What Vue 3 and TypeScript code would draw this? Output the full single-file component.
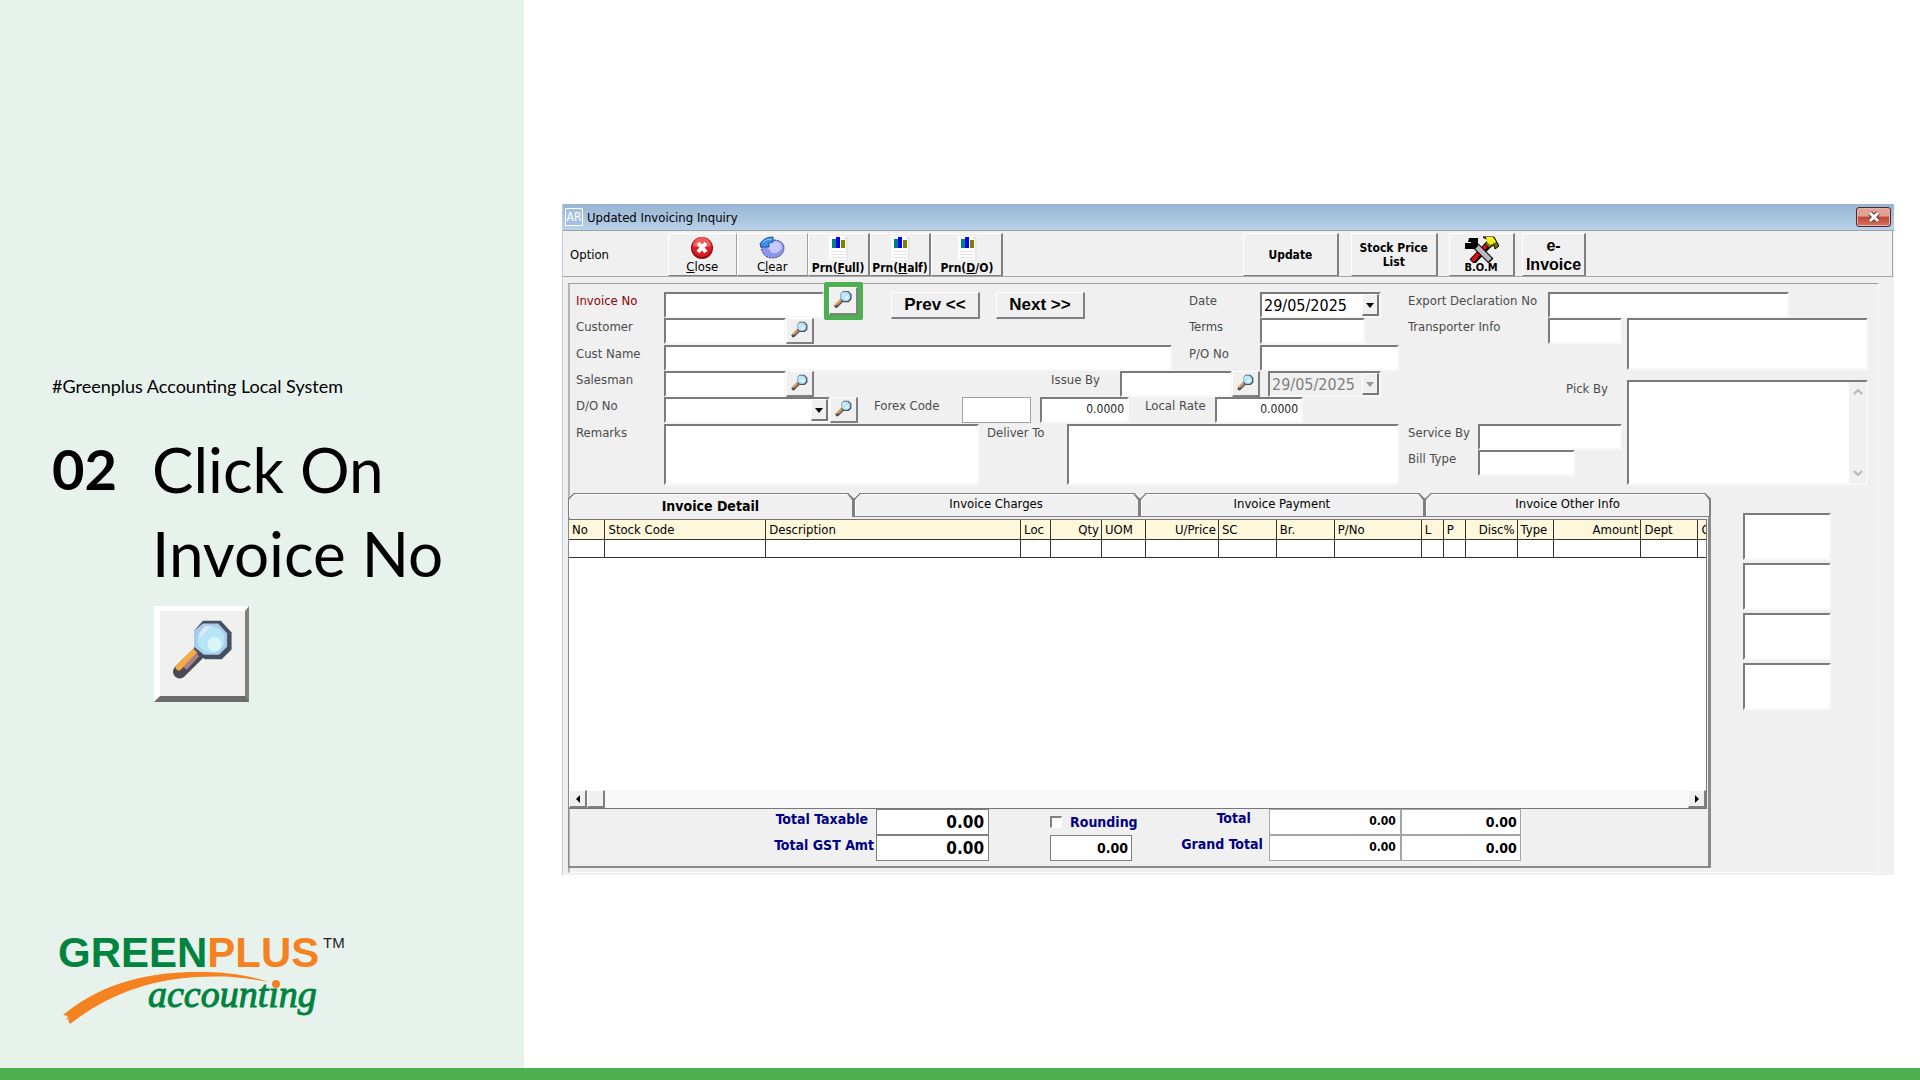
<script setup lang="ts">
import { ref, h } from 'vue'

interface Column { name: string; width: number; right?: boolean }

const columns: Column[] = [
  { name: 'No', width: 36 },
  { name: 'Stock Code', width: 161 },
  { name: 'Description', width: 255 },
  { name: 'Loc', width: 30 },
  { name: 'Qty', width: 51, right: true },
  { name: 'UOM', width: 44 },
  { name: 'U/Price', width: 73, right: true },
  { name: 'SC', width: 58 },
  { name: 'Br.', width: 58 },
  { name: 'P/No', width: 87 },
  { name: 'L', width: 22 },
  { name: 'P', width: 22 },
  { name: 'Disc%', width: 52, right: true },
  { name: 'Type', width: 36 },
  { name: 'Amount', width: 88, right: true },
  { name: 'Dept', width: 57 },
  { name: 'C', width: 8 },
]
const totalWidth = columns.reduce((sum, c) => sum + c.width, 0)

const tabs = ['Invoice Detail', 'Invoice Charges', 'Invoice Payment', 'Invoice Other Info']
const activeTab = ref(0)

const Magnifier = () =>
  h('svg', { viewBox: '0 0 95 95', class: 'magnifier', 'aria-hidden': 'true', style: 'display:block;width:100%;height:100%' }, [
    h('path', { d: 'M42 48 L22 68', stroke: '#4a4a55', 'stroke-width': 15, 'stroke-linecap': 'round' }),
    h('path', { d: 'M40 44 L21 63', stroke: '#f5ab42', 'stroke-width': 7, 'stroke-linecap': 'round' }),
    h('path', { d: 'M42 49 L28 64', stroke: '#a9828a', 'stroke-width': 5 }),
    h('path', { d: 'M48 11 H68 L80 24 V43 L69 54 H50 L38 43 V22 Z', fill: '#44505f' }),
    h('path', { d: 'M48 14 H65 L75 25 V40 L66 49 H49 L38 40 V22 Z', fill: '#a9ccec' }),
    h('circle', { cx: 57, cy: 32, r: 15, fill: '#b5e6f6' }),
    h('circle', { cx: 61, cy: 37, r: 8, fill: '#d9f5f6' }),
    h('path', { d: 'M43 26 L50 17 L57 17 L45 30 Z', fill: '#dbe9fa' }),
  ])

const Report = () =>
  h('svg', { viewBox: '0 0 22 26', class: 'report', 'aria-hidden': 'true', style: 'display:block;width:22px;height:26px' }, [
    h('path', { d: 'M2 1 H17 L21 5 V25 H2 Z', fill: '#ffffff' }),
    h('path', { d: 'M17 3 H20 V25', fill: 'none', stroke: '#cfcfcf' }),
    h('rect', { x: 5, y: 4, width: 4, height: 9, fill: '#008080' }),
    h('rect', { x: 9, y: 2, width: 4, height: 11, fill: '#0000ff' }),
    h('rect', { x: 14, y: 5, width: 4, height: 8, fill: '#808000' }),
    h('path', { d: 'M4 16.5 H18 M4 19.5 H18 M4 22.5 H18', stroke: '#e4e4e4' }),
  ])
</script>

<template>
  <div class="page">
    <aside class="intro">
      <p class="tag">#Greenplus Accounting Local System</p>
      <div class="step">
        <strong class="number">02</strong>
        <div>
          <h1>Click On<br />Invoice No</h1>
          <button class="look big" aria-label="Search"><Magnifier /></button>
        </div>
      </div>
      <svg class="logo" viewBox="0 0 300 100" role="img" aria-label="Greenplus accounting">
        <text x="0" y="36" class="brand"><tspan fill="#00833f">GREEN</tspan><tspan fill="#f58220">PLUS</tspan></text>
        <text x="265" y="17" class="tm">TM</text>
        <path d="M5 84 C48 49 95 41 140 41 C168 41 190 44 211 51 C180 45 160 45 140 46 C95 48 52 62 12 93 L10 89 L12 87 L8 89 L10 85 Z" fill="#f58220" />
        <text x="90" y="76" class="sub">accounting</text>
        <circle cx="218" cy="53" r="4" fill="#f58220" />
      </svg>
    </aside>

    <main class="stage">
      <section class="window">
        <header class="titlebar">
          <span class="app-icon">AR</span>
          <span>Updated Invoicing Inquiry</span>
          <button class="exit" aria-label="Close window">
            <svg viewBox="0 0 14 12"><path d="M3 2 L11 10 M11 2 L3 10" stroke="#6b3838" stroke-width="5" /><path d="M3 2 L11 10 M11 2 L3 10" stroke="#fff" stroke-width="3" /></svg>
          </button>
        </header>

        <nav class="toolbar">
          <span class="option">Option</span>
          <button class="tool w-close flat">
            <svg class="glyph" viewBox="0 0 24 24"><circle cx="12" cy="12" r="11" fill="#8e0d12" /><circle cx="12" cy="11" r="10" fill="#dc1d22" /><path d="M3 10 A9 9 0 0 1 21 10 Q12 13 3 10" fill="#ec5c58" /><path d="M8 7 L16 16 M16 7 L8 16" stroke="#fff" stroke-width="4" /></svg>
            <span><u>C</u>lose</span>
          </button>
          <button class="tool w-clear flat">
            <svg class="glyph wide" viewBox="0 0 26 24"><path d="M2 10 Q3 22 14 22 Q25 21 25 11 Q24 4 14 4 L12 11 Z" fill="#8f93ee" stroke="#35356e" stroke-dasharray="2 1" /><path d="M8 11 L15 5 Q23 6 23 12 Q20 18 13 17 Z" fill="#c5c9ff" /><path d="M1 8 Q5 1 14 1 V6 L10 7 V11 H2 Z" fill="#3f91e8" stroke="#164f9b" /><path d="M4 6 Q7 3 13 3" fill="none" stroke="#93c8ff" /></svg>
            <span>C<u>l</u>ear</span>
          </button>
          <button class="tool w-full"><Report /><b>Prn(<u>F</u>ull)</b></button>
          <button class="tool w-half"><Report /><b>Prn(<u>H</u>alf)</b></button>
          <button class="tool w-do"><Report /><b>Prn(<u>D</u>/O)</b></button>
          <button class="tool w-update"><b>Update</b></button>
          <button class="tool w-stock"><b>Stock Price<br />List</b></button>
          <button class="tool w-bom">
            <svg class="tools" viewBox="0 0 36 28"><path d="M9 27 L25 10" stroke="#000" stroke-width="7" /><path d="M9 26 L24 10" stroke="#e01010" stroke-width="4" /><path d="M13 11 L28 26" stroke="#000" stroke-width="7" /><path d="M13 11 L27 25" stroke="#b9b9bf" stroke-width="5" /><path d="M6 3 H15 V11 L12 14 H2 V8 H8 V7 H5 Z" fill="#000" /><path d="M20 2 H31 L36 11 L32 14 L31 10 L26 13 L22 9 L25 5 Z" fill="#777000" stroke="#000" /><path d="M23 2 H30 L33 7 L27 10 L24 7 Z" fill="#f7ef13" /></svg>
            <b>B.O.M</b>
          </button>
          <button class="tool w-einv"><b>e-<br />Invoice</b></button>
        </nav>

        <div class="panel">
          <form class="form" @submit.prevent>
            <div class="left">
              <div class="upper">
                <div>
                  <div class="row r1">
                    <label for="inv" class="required">Invoice No</label>
                    <input id="inv" class="field" />
                    <div class="highlight"><button type="button" class="look" aria-label="Find invoice"><Magnifier /></button></div>
                    <div class="paging">
                      <button type="button">Prev &lt;&lt;</button>
                      <button type="button">Next &gt;&gt;</button>
                    </div>
                  </div>
                  <div class="row r2">
                    <label for="cust">Customer</label>
                    <input id="cust" class="field" />
                    <button type="button" class="look" aria-label="Find customer"><Magnifier /></button>
                  </div>
                  <div class="row r3 tall">
                    <label for="name">Cust Name</label>
                    <input id="name" class="field" />
                  </div>
                </div>
                <div>
                  <div class="row d1">
                    <label for="date">Date</label>
                    <span class="combo"><select id="date"><option>29/05/2025</option></select><i class="drop"></i></span>
                  </div>
                  <div class="row d2">
                    <label for="terms">Terms</label>
                    <input id="terms" class="field" />
                  </div>
                  <div class="row d3 tall">
                    <label for="po">P/O No</label>
                    <input id="po" class="field" />
                  </div>
                </div>
              </div>
              <div class="row r4">
                <label for="sales">Salesman</label>
                <input id="sales" class="field" />
                <button type="button" class="look" aria-label="Find salesman"><Magnifier /></button>
                <label for="issue" class="end">Issue By</label>
                <input id="issue" class="field" />
                <button type="button" class="look" aria-label="Find issuer"><Magnifier /></button>
                <span class="combo off"><select aria-label="Issue date" disabled><option>29/05/2025</option></select><i class="drop"></i></span>
              </div>
              <div class="row r5">
                <label for="do">D/O No</label>
                <span class="combo"><select id="do"><option></option></select><i class="drop"></i></span>
                <button type="button" class="look" aria-label="Find delivery order"><Magnifier /></button>
                <label for="forex" class="inset">Forex Code</label>
                <input id="forex" class="field thin" />
                <input class="field num spaced" aria-label="Forex rate" value="0.0000" />
                <label for="rate" class="inset">Local Rate</label>
                <input id="rate" class="field num" value="0.0000" />
              </div>
              <div class="row r6">
                <label for="remarks">Remarks</label>
                <textarea id="remarks" class="field"></textarea>
                <label for="deliver" class="near">Deliver To</label>
                <textarea id="deliver" class="field"></textarea>
              </div>
            </div>

            <div class="right">
              <div class="row e1">
                <label for="export">Export Declaration No</label>
                <input id="export" class="field" />
              </div>
              <div class="e2">
                <label for="trans">Transporter Info</label>
                <input id="trans" class="field" />
                <textarea class="field" aria-label="Transporter details"></textarea>
              </div>
              <div class="e3">
                <div>
                  <label for="pick" class="pick">Pick By</label>
                  <div class="row e4">
                    <label for="service">Service By</label>
                    <input id="service" class="field" />
                  </div>
                  <div class="row e5">
                    <label for="bill">Bill Type</label>
                    <input id="bill" class="field" />
                  </div>
                </div>
                <div class="pickbox">
                  <textarea id="pick" class="field"></textarea>
                  <div class="vbar">
                    <svg viewBox="0 0 10 6"><path d="M1 5 L5 1 L9 5" /></svg>
                    <svg viewBox="0 0 10 6"><path d="M1 1 L5 5 L9 1" /></svg>
                  </div>
                </div>
              </div>
            </div>
          </form>

          <div class="lower">
            <section class="pane">
              <div class="tabs" role="tablist">
                <button v-for="(t, i) in tabs" :key="t" role="tab" :class="{ active: i === activeTab }" :aria-selected="i === activeTab" @click="activeTab = i">{{ t }}</button>
              </div>
              <div class="sheet">
                <div class="grid-area">
                  <table>
                    <colgroup>
                      <col v-for="c in columns" :key="c.name" :style="{ width: (c.width / totalWidth) * 100 + '%' }" />
                    </colgroup>
                    <thead>
                      <tr><th v-for="c in columns" :key="c.name" :class="{ end: c.right }">{{ c.name }}</th></tr>
                    </thead>
                    <tbody>
                      <tr><td v-for="c in columns" :key="c.name"></td></tr>
                    </tbody>
                  </table>
                  <div class="hbar">
                    <button aria-label="Scroll left"><svg viewBox="0 0 6 8"><path d="M5 0 V8 L1 4 Z" /></svg></button>
                    <span class="thumb"></span>
                    <button class="last" aria-label="Scroll right"><svg viewBox="0 0 6 8"><path d="M1 0 V8 L5 4 Z" /></svg></button>
                  </div>
                </div>
                <div class="totals">
                  <div class="t-tax">
                    <label for="taxable">Total Taxable</label><input id="taxable" value="0.00" />
                    <label for="gst">Total GST Amt</label><input id="gst" value="0.00" />
                  </div>
                  <div class="t-round">
                    <label><input type="checkbox" />Rounding</label>
                    <input aria-label="Rounding amount" value="0.00" />
                  </div>
                  <div class="t-grand">
                    <label for="total">Total</label><input id="total" class="small" value="0.00" /><input aria-label="Total in local currency" value="0.00" />
                    <label for="grand">Grand Total</label><input id="grand" class="small" value="0.00" /><input aria-label="Grand total in local currency" value="0.00" />
                  </div>
                </div>
              </div>
            </section>
            <div class="side">
              <textarea v-for="n in 4" :key="n" class="field" :aria-label="'Note ' + n"></textarea>
            </div>
          </div>
        </div>
      </section>
    </main>
    <footer class="strip"></footer>
  </div>
</template>

<style>
body { margin: 0; }
</style>

<style scoped>
* { box-sizing: border-box; }
.page {
  min-height: 100vh;
  display: grid;
  grid-template: 1fr 12px / 131fr 349fr;
  background: #fff;
  font-family: "DejaVu Sans Condensed", "Noto Sans", sans-serif;
}
.strip { grid-column: 1 / 3; background: #4caf50; }
button, input, select, textarea { font: inherit; color: inherit; margin: 0; padding: 0; border-radius: 0; }

.intro {
  background: #e8f2ec;
  padding: 373px 20px 37px 52px;
  display: flex;
  flex-direction: column;
  color: #000;
  font-family: Lato, sans-serif;
}
.tag { margin: 0; font-size: 18px; line-height: 26px; }
.step { display: grid; grid-template-columns: 100px 1fr; margin-top: 28px; }
.number { font-size: 56px; line-height: 84px; }
h1 { margin: 0; font-size: 62px; line-height: 84px; font-weight: 400; white-space: nowrap; }
.logo { width: 300px; height: 100px; margin: auto 0 0 6px; overflow: visible; }
.brand { font: bold 42px "Liberation Sans", sans-serif; }
.tm { font: 15px "Liberation Sans", sans-serif; fill: #222; }
.sub { font: italic 38px "Liberation Serif", serif; fill: #00833f; stroke: #00833f; stroke-width: 1px; }

.look {
  display: block;
  width: 28px;
  height: 26px;
  background: #f0f0f0;
  border: 1px solid #fff;
  border-right: 2px solid #808080;
  border-bottom: 2px solid #808080;
}
.look.big { width: 95px; height: 96px; margin: 11px 0 0 2px; border-width: 5px 4px 6px 6px; border-bottom-color: #6a6a6a; }

.stage { display: flex; flex-direction: column; justify-content: center; padding: 11px 26px 0 38px; min-width: 0; }
.window { background: #f0f0f0; border-left: 1px solid #b9cfe8; padding-bottom: 2px; color: #000; font-size: 13px; }
.titlebar {
  height: 27px;
  display: flex;
  align-items: center;
  gap: 4px;
  padding: 0 3px 0 2px;
  background: linear-gradient(#98b4d2, #b9d1ea);
  border-bottom: 1px solid #a0a0a0;
}
.app-icon { width: 18px; height: 18px; border: 1px solid #fff; color: #fff; font-size: 12px; line-height: 16px; text-align: center; background: #a5c0de; }
.exit { margin-left: auto; width: 35px; height: 20px; border: 1px solid #4d2430; border-radius: 3px; background: linear-gradient(#e0a294 0 45%, #c24434 50%, #d2735f); display: grid; place-items: center; box-shadow: inset 0 0 0 1px #e8b4aa; }
.exit svg { width: 14px; height: 12px; }

.toolbar {
  display: grid;
  grid-template-columns: 105fr 69fr 71fr 62fr 62fr 72fr 240fr 96fr 12fr 87fr 11fr 66fr 7fr 65fr 306fr;
  height: 46px;
  padding-top: 2px;
  margin-right: 1px;
  border: 1px solid #a5a5a5;
  border-width: 0 1px 1px 0;
}
.option { align-self: center; padding-left: 7px; }
.tool {
  min-width: 0;
  display: flex;
  flex-direction: column;
  align-items: center;
  justify-content: center;
  white-space: nowrap;
  line-height: 14px;
  background: #f0f0f0;
  border: 1px solid #fff;
  border-right: 2px solid #808080;
  border-bottom: 1px solid #808080;
  overflow: hidden;
}
.tool b { font-size: 12px; }
.tool.flat { border-right: 1px solid #a0a0a0; }
.w-update { grid-column: 8; }
.w-stock { grid-column: 10; }
.w-bom { grid-column: 12; }
.tool.w-bom b { font-size: 11px; margin-top: -2px; }
.w-einv { grid-column: 14; font-family: "Liberation Sans", sans-serif; }
.tool.w-einv b { font-size: 16px; line-height: 19px; }
.glyph { width: 24px; height: 24px; }
.glyph.wide { width: 26px; }
.tools { width: 36px; height: 28px; }

.panel { margin: 6px 15px 0 5px; border: 1px solid #fafafa; border-top-color: #a0a0a0; border-left: 2px solid #b4b4b4; }
.form { display: grid; grid-template-columns: 832fr 460fr; padding: 8px 10px 0 6px; }
label { line-height: 18px; color: #4b4b4b; white-space: nowrap; }
.required { color: #8b0000; }
.upper { display: grid; grid-template-columns: 613fr 219fr; }
.row { display: grid; height: 26px; }
.row.tall, .row.r3 { margin-top: 1px; }
.row > * { min-width: 0; }
.field {
  width: 100%;
  height: 26px;
  background: #fff;
  border: 2px solid #f8f8f8;
  border-top-color: #7b7b7b;
  border-left-color: #7b7b7b;
  outline: 0;
  resize: none;
  display: block;
}
.thin { border: 1px solid #a0a0a0; }
.num { text-align: right; font-size: 12px; padding: 0 3px 3px 0; color: #222; }
.spaced { width: auto; margin-left: 9px; }
.end { text-align: right; }
.r1 { grid-template-columns: 88fr 160fr 39fr 326fr; }
.r2 { grid-template-columns: 88fr 122fr 28fr 375fr; }
.r3 { grid-template-columns: 88fr 508fr 17fr; }
.d1 { grid-template-columns: 71fr 121fr 27fr; }
.d2 { grid-template-columns: 71fr 105fr 43fr; }
.d3 { grid-template-columns: 71fr 139fr 9fr; }
.r4 { grid-template-columns: 88fr 122fr 28fr 306fr 112fr 28fr 121fr 27fr; }
.r4 .end { padding-right: 20px; }
.r5 { grid-template-columns: 88fr 166fr 28fr 104fr 69fr 98fr 86fr 88fr 105fr; }
.r6 { grid-template-columns: 88fr 315fr 88fr 332fr 9fr; height: 61px; margin-top: 1px; }
.r6 .field { height: 61px; }
.inset { padding-left: 16px; }
.near { padding-left: 8px; }
.highlight { margin-top: -10px; height: 38px; border: 5px solid #4caf50; border-radius: 2px; background: #f0f0f0; position: relative; }
.highlight .look { width: 100%; height: 28px; }
.paging { display: flex; gap: 16px; padding-left: 28px; }
.paging button {
  width: 89px;
  height: 27px;
  font: bold 17px/22px "Liberation Sans", sans-serif;
  background: #f0f0f0;
  border: 1px solid #fff;
  border-right: 2px solid #808080;
  border-bottom: 2px solid #808080;
  white-space: nowrap;
}
.combo { position: relative; display: block; height: 26px; background: #fff; border: 2px solid #f8f8f8; border-top-color: #7b7b7b; border-left-color: #7b7b7b; }
.combo select { appearance: none; width: 100%; height: 22px; border: 0; background: transparent; padding: 2px 0 0 2px; font-size: 16px; line-height: 20px; opacity: 1; outline: 0; }
.combo.off { margin-left: 8px; background: #f0f0f0; color: #808080; }
.drop { position: absolute; right: 0; top: 0; width: 17px; height: 22px; pointer-events: none; background: #f0f0f0; border: 1px solid #fff; border-right: 2px solid #777; border-bottom: 2px solid #777; }
.drop::after { content: ""; position: absolute; left: 3px; top: 8px; border: 4px solid transparent; border-top: 5px solid #000; border-bottom: 0; }
.off .drop::after { border-top-color: #999; }

.right { display: flex; flex-direction: column; }
.e1 { grid-template-columns: 140fr 241fr 79fr; }
.e2 { display: grid; grid-template-columns: 140fr 74fr 5fr 241fr; height: 62px; }
.e2 textarea { grid-column: 4; height: 52px; }
.e3 { display: grid; grid-template-columns: 219fr 241fr; height: 105px; }
.pick { display: block; text-align: right; padding-right: 19px; height: 44px; }
.e4 { grid-template-columns: 70fr 144fr 5fr; }
.e5 { grid-template-columns: 70fr 97fr 52fr; }
.pickbox { position: relative; }
.pickbox .field { height: 105px; }
.vbar { position: absolute; top: 2px; right: 2px; bottom: 2px; width: 17px; background: #f0f0f0; display: flex; flex-direction: column; justify-content: space-between; align-items: center; padding: 7px 0; }
.vbar svg { width: 10px; height: 6px; fill: none; stroke: #b5b5b5; stroke-width: 2; }

.lower { display: grid; grid-template-columns: 1143fr 167fr; margin: 8px 0 4px -2px; }
.pane { min-width: 0; }
.tabs { display: grid; grid-template-columns: repeat(4, 1fr); height: 24px; }
.tabs button { border: 1px solid #808080; border-right-width: 2px; border-radius: 6px 6px 0 0; corner-shape: bevel bevel square square; background: #f0f0f0; box-shadow: inset 1px 1px #fff; line-height: 20px; padding-bottom: 2px; }
.tabs .active { border-bottom-width: 0; font-weight: bold; font-size: 14px; padding: 1px 0 0; }
.sheet { border: 1px solid #8a8a8a; border-width: 0 3px 2px 1px; padding-top: 2px; }
.grid-area { height: 290px; background: #fff; border: 1px solid #777; border-width: 1px 1px 1px 0; margin-right: 1px; display: flex; flex-direction: column; }
table { width: 100%; table-layout: fixed; border-collapse: collapse; }
th, td { height: 19px; padding: 0 2px 0 3px; border: 1px solid #333; border-left: 0; border-top: 0; line-height: 17px; }
td { height: 18px; }
th { background: #fdf7dc; font-weight: 400; text-align: left; overflow: hidden; white-space: nowrap; }
th.end { text-align: right; }
th:last-child, td:last-child { border-right: 0; padding-right: 0; }
.hbar { margin-top: auto; height: 18px; display: flex; background: #f8f8f8; }
.hbar button, .thumb { width: 18px; height: 18px; background: #f0f0f0; border: 1px solid #fff; border-right: 2px solid #808080; border-bottom: 2px solid #808080; display: grid; place-items: center; }
.hbar svg { width: 6px; height: 8px; }
.hbar .last { margin-left: auto; }

.totals { display: grid; grid-template-columns: 422fr 143fr 385fr 188fr; height: 57px; color: #000; font-weight: bold; }
.totals label { color: #000080; text-align: right; font-size: 14px; }
.totals input { border: 1px solid #808080; background: #fff; text-align: right; outline: 0; min-width: 0; padding-right: 3px; font-size: 14px; }
.totals .t-tax { display: grid; grid-template-columns: 1fr 113px; grid-auto-rows: 26px; align-content: start; }
.totals .t-tax label { padding-right: 2px; line-height: 20px; }
.totals .t-tax label:first-child { padding-right: 8px; }
.totals .t-tax input { font-size: 17px; padding-right: 4px; }
.t-round { padding-left: 61px; }
.t-round label { display: flex; align-items: center; gap: 8px; height: 26px; }
.t-round > input { width: 82px; height: 26px; }
.totals input[type="checkbox"] { appearance: none; width: 12px; height: 12px; border: 1px solid #f8f8f8; border-top: 2px solid #808080; border-left: 2px solid #808080; padding: 0; }
.t-grand { display: grid; grid-template-columns: 1fr 132px 120px; grid-auto-rows: 26px; align-content: start; }
.t-grand label { padding-right: 6px; }
.t-grand label:first-child { padding-right: 18px; }
.totals .t-grand input { border-color: #a5a5a5; }
.totals .t-grand .small { font-size: 12px; padding: 0 4px 2px 0; }

.side { padding: 20px 47px 0 32px; display: flex; flex-direction: column; gap: 3px; }
.side .field { height: 47px; }
</style>
